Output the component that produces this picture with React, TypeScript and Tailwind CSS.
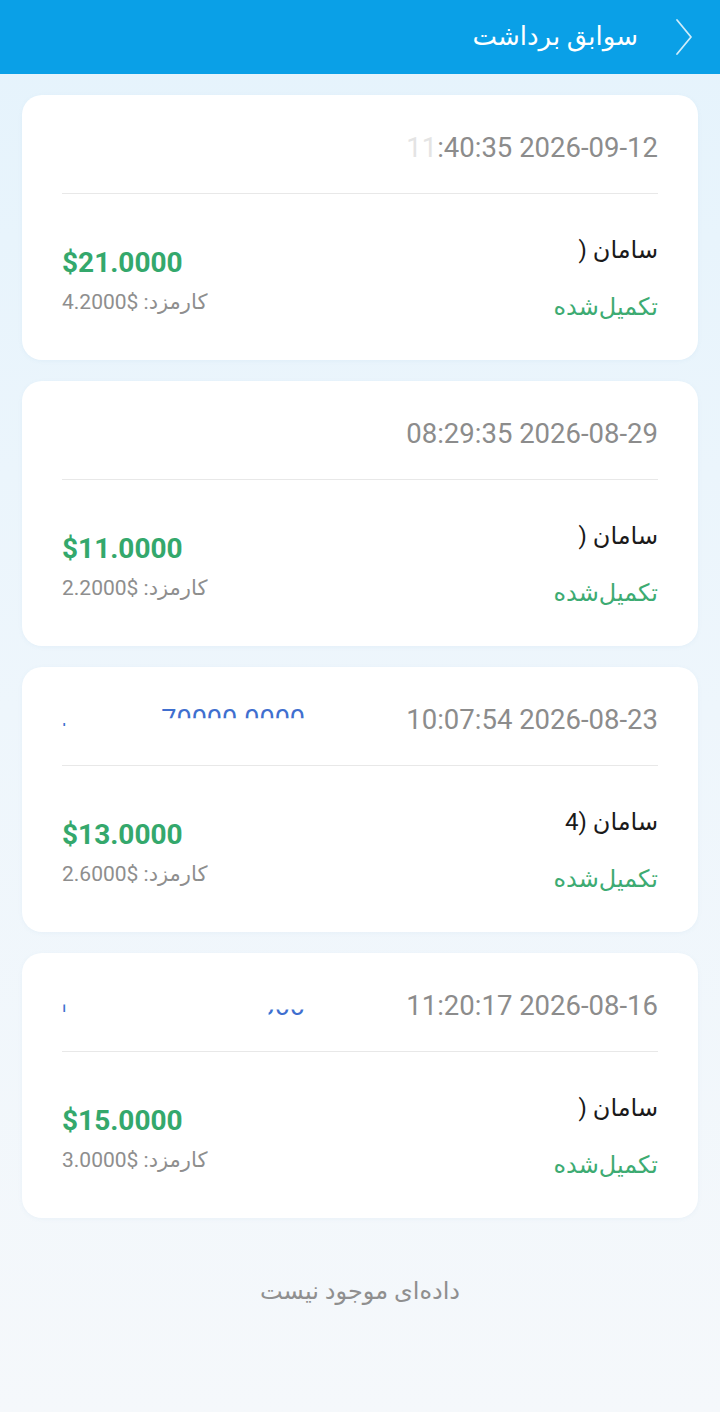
import React from "react";

interface Withdrawal {
  id: string;
  date: string;
  datePrefix?: string;
  name: string;
  amount: string;
  fee: string;
  masked?: "top" | "bottom";
}

const rows: Withdrawal[] = [
  { id: "1", datePrefix: "11", date: ":40:35 2026-09-12", name: "سامان (", amount: "$21.0000", fee: "4.2000$" },
  { id: "2", date: "08:29:35 2026-08-29", name: "سامان (", amount: "$11.0000", fee: "2.2000$" },
  { id: "3", date: "10:07:54 2026-08-23", name: "سامان (4", amount: "$13.0000", fee: "2.6000$", masked: "top" },
  { id: "4", date: "11:20:17 2026-08-16", name: "سامان (", amount: "$15.0000", fee: "3.0000$", masked: "bottom" },
];

function Chevron() {
  return (
    <svg width="20" height="38" viewBox="0 0 20 38" fill="none">
      <polyline points="3,2 17,19 3,36" stroke="white" strokeOpacity="0.8" strokeWidth="1.8" strokeLinecap="round" strokeLinejoin="round" />
    </svg>
  );
}

function Card({ item }: { item: Withdrawal }) {
  return (
    <div className="bg-white rounded-[20px] px-10 shadow-[0_1px_4px_rgba(120,160,200,0.08)]">
      {/* header: date + partly hidden amount */}
      <div className="flex justify-between items-center pt-[38px] pb-[30px] border-b border-[#e8e8e8]">
        <span dir="ltr" className="text-[27.5px] leading-[30px] text-[#8c8c8c]">
          {item.datePrefix && <span className="text-[#e4e4e4]">{item.datePrefix}</span>}
          {item.date}
        </span>
        {item.masked === "top" && (
          <span dir="ltr" className="flex w-[243px] justify-between text-[27px] leading-[30px] text-[#3f6fcf]">
            <span className="[clip-path:inset(60%_0_0_0)] text-[18px]">ı</span>
            <span className="[clip-path:inset(0_0_56%_0)]">70000.0000</span>
          </span>
        )}
        {item.masked === "bottom" && (
          <span dir="ltr" className="flex w-[243px] justify-between text-[27px] leading-[30px] text-[#3f6fcf]">
            <span className="[clip-path:inset(45%_0_0_0)] text-[18px]">ı</span>
            <span className="[clip-path:inset(62%_0_0_40%)]">0000</span>
          </span>
        )}
      </div>

      {/* body */}
      <div className="flex justify-between items-start pt-10 pb-[37px]">
        <div className="flex flex-col gap-[25px]">
          <span className="text-[24px] leading-[32px] text-[#1a1a1a]">{item.name}</span>
          <span className="text-[24px] leading-[32px] text-[#3dab72]">تکمیل‌شده</span>
        </div>
        <div className="flex flex-col items-end gap-[12px] pt-[14px]">
          <span dir="ltr" className="text-[28px] leading-[30px] font-bold text-[#34a86c]">
            {item.amount}
          </span>
          <span className="text-[21px] leading-[24px] text-[#8e8e8e]">
            کارمزد: <span dir="ltr">{item.fee}</span>
          </span>
        </div>
      </div>
    </div>
  );
}

export default function App() {
  return (
    <div
      dir="rtl"
      className="min-h-[1412px] w-full bg-gradient-to-b from-[#e5f3fc] via-[#eef6fc] to-[#f5f8fb]"
      style={{ fontFamily: 'Roboto, "DejaVu Sans", sans-serif' }}
    >
      <div className="h-[74px] bg-[#0aa0e7] flex items-center gap-[36px] pr-[26px]">
        <Chevron />
        <span className="text-white text-[26px] leading-[30px] pb-[2px]">سوابق برداشت</span>
      </div>

      <div className="flex flex-col gap-[21px] px-[22px] pt-[21px]">
        {rows.map((item) => (
          <Card key={item.id} item={item} />
        ))}
      </div>

      <div className="text-center text-[24px] leading-[30px] text-[#8f8f8f] mt-[58px]">داده‌ای موجود نیست</div>
    </div>
  );
}
